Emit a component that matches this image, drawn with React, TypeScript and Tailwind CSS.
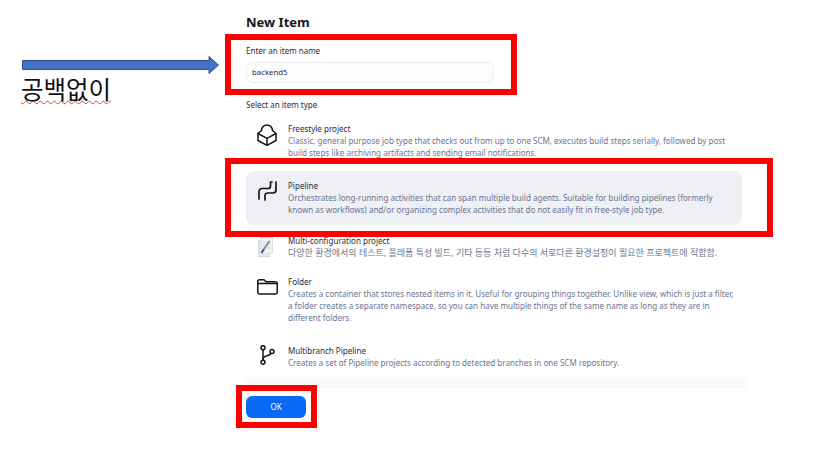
import React from 'react'

const FONT = "font-['Noto_Sans','Noto_Sans_CJK_KR',sans-serif]"

// ---- icons ----

function FreestyleIcon() {
  return (
    <svg viewBox="0 0 20 23" className="w-[20px] h-[23px]" fill="none" stroke="#14141f" strokeWidth="1.500" strokeLinejoin="round" strokeLinecap="round">
      <path d="M4.500 7.500a5.500 5.500 0 1 1 11 0" />
      <path d="M4.500 7.500L1 10.500v7l9 4.800 9-4.800v-7l-3.500-3" />
      <path d="M1 10.500l9 4.800 9-4.800M10 15.300v7" />
    </svg>
  )
}

function PipelineIcon() {
  return (
    <svg viewBox="0 0 19 20" className="w-[19px] h-[20px]" fill="none" stroke="#14141f" strokeWidth="1.700" strokeLinecap="round" strokeLinejoin="round">
      <path d="M1 18v-7.500a3 3 0 0 1 3-3h6a2.500 2.500 0 0 0 2.500-2.500V1H14" />
      <path d="M7 19v-4.500a2.500 2.500 0 0 1 2.500-2.500h5.500a3 3 0 0 0 3-3V1" />
    </svg>
  )
}

function MultiConfigIcon() {
  return (
    <svg viewBox="0 0 15 20" className="w-[15px] h-[20px]">
      <rect x="0.500" y="3.500" width="11" height="16" fill="#e6e6e6" stroke="#d8d8d8" />
      <rect x="3" y="0.500" width="11.500" height="16" fill="#f2f2f2" stroke="#dedede" />
      <path d="M5 5h8M5 8h8M5 11h8" stroke="#d6d6d6" />
      <path d="M11.500 4L6 12" stroke="#7f93b8" strokeWidth="2" />
      <path d="M6 12L3.500 16" stroke="#44608f" strokeWidth="2.200" />
    </svg>
  )
}

function FolderIcon() {
  return (
    <svg viewBox="0 0 21 16" className="w-[21px] h-[16px]" fill="none" stroke="#14141f" strokeWidth="1.500" strokeLinejoin="round">
      <path d="M0.800 2.500a1.700 1.700 0 0 1 1.700-1.700h4.500l2 2h9.500a1.700 1.700 0 0 1 1.700 1.700v8.800a1.700 1.700 0 0 1-1.700 1.700h-16a1.700 1.700 0 0 1-1.700-1.700z" />
      <path d="M0.800 4.500h19.400" />
    </svg>
  )
}

function MultibranchIcon() {
  return (
    <svg viewBox="0 0 15 20" className="w-[15px] h-[20px]" fill="none" stroke="#14141f" strokeWidth="1.500">
      <circle cx="3" cy="2.700" r="2" />
      <circle cx="3" cy="17.300" r="2" />
      <circle cx="12" cy="6.500" r="2" />
      <path d="M3 4.700v10.600" />
      <path d="M3 14.500c0-2.500 1.500-3 4-3.700 2.500-.7 3.800-1.300 4.300-2.500" />
    </svg>
  )
}

// ---- item row ----

interface ItemRowProps {
  title: string
  icon: React.ReactNode
  selected?: boolean
  className?: string
  children: React.ReactNode
}

function ItemRow({ title, icon, selected = false, className = '', children }: ItemRowProps) {
  return (
    <div className={`flex w-[496px] rounded-[8px] ${selected ? 'bg-[#eef0f5]' : ''} ${className}`}>
      <div className="w-[42px] shrink-0 flex justify-center">{icon}</div>
      <div className="w-[446px]">
        <div className="text-[8.050px] leading-[12px] text-[#2c2c38]">{title}</div>
        <div className="text-[8.050px] leading-[12.300px] text-[#6b7592]">{children}</div>
      </div>
    </div>
  )
}

export default function App() {
  return (
    <div className={`relative w-[819px] h-[471px] overflow-hidden bg-white ${FONT}`}>
      <div className="ml-[246px] w-[496px] pt-[14px] flex flex-col items-start">
        <h1 className="text-[13px] leading-[16px] font-bold text-[#14141f]">New Item</h1>

        <div className="mt-[16px] text-[8px] leading-[10px] text-[#2c2c38]">Enter an item name</div>
        <div className="mt-[6px] w-[248px] h-[21px] rounded-[7px] border border-[#eceef3] bg-[#fdfdfe] px-[5px] flex items-center text-[7.800px] text-[#2c2c38]">
          backend5
        </div>

        <div className="mt-[17px] text-[8px] leading-[10px] text-[#2c2c38]">Select an item type</div>

        <ItemRow title="Freestyle project" className="mt-[13px]" icon={<FreestyleIcon />}>
          Classic, general purpose job type that checks out from up to one SCM, executes build steps serially, followed by post build steps like archiving artifacts and sending email notifications.
        </ItemRow>

        <ItemRow
          title="Pipeline"
          selected
          className="mt-[11px] h-[54px] pt-[9px]"
          icon={<div className="mt-[1px]"><PipelineIcon /></div>}
        >
          Orchestrates long-running activities that can span multiple build agents. Suitable for building pipelines (formerly known as workflows) and/or organizing complex activities that do not easily fit in free-style job type.
        </ItemRow>

        <ItemRow
          title="Multi-configuration project"
          className="mt-[10px]"
          icon={<div className="mt-[2px] mr-[3px]"><MultiConfigIcon /></div>}
        >
          <span className="text-[9px]">다양한 환경에서의 테스트, 플래폼 특성 빌드, 기타 등등 처럼 다수의 서로다른 환경설정이 필요한 프로젝트에 적합함.</span>
        </ItemRow>

        <ItemRow
          title="Folder"
          className="mt-[17px]"
          icon={<div className="mt-[3px]"><FolderIcon /></div>}
        >
          Creates a container that stores nested items in it. Useful for grouping things together. Unlike view, which is just a filter, a folder creates a separate namespace, so you can have multiple things of the same name as long as they are in different folders.
        </ItemRow>

        <ItemRow title="Multibranch Pipeline" className="mt-[20px]" icon={<MultibranchIcon />}>
          Creates a set of Pipeline projects according to detected branches in one SCM repository.
        </ItemRow>

        <button className="mt-[27px] block w-[60px] h-[22px] rounded-[6px] bg-[#0769f6] text-white text-[8px]">OK</button>
      </div>

      {/* fade band above the button */}
      <div className="absolute left-[246px] top-[372px] w-[500px] h-[16px] bg-gradient-to-b from-white to-[#f8f8fa]" />

      {/* annotations pasted over the page */}
      <div className="absolute left-[225px] top-[34px] w-[292px] h-[61px] border-[6px] border-[#ff0000]" />
      <div className="absolute left-[225px] top-[158px] w-[548px] h-[79px] border-[6px] border-[#ff0000]" />
      <div className="absolute left-[236px] top-[385px] w-[81px] h-[43px] border-[6px] border-[#ff0000]" />

      <svg viewBox="0 0 197 18" className="absolute left-[22px] top-[56px] w-[197px] h-[18px]">
        <path d="M0.500 4.500H187V0.500L196.500 9L187 17.500V13.500H0.500z" fill="#4472c4" stroke="#2f528f" />
      </svg>
      <div className="absolute left-[21px] top-[73px] text-[24.500px] leading-[32px] text-[#111111] underline decoration-wavy decoration-[#e04040] decoration-1 underline-offset-[1px] font-['Noto_Sans_CJK_KR',sans-serif]">
        공백없이
      </div>
    </div>
  )
}
